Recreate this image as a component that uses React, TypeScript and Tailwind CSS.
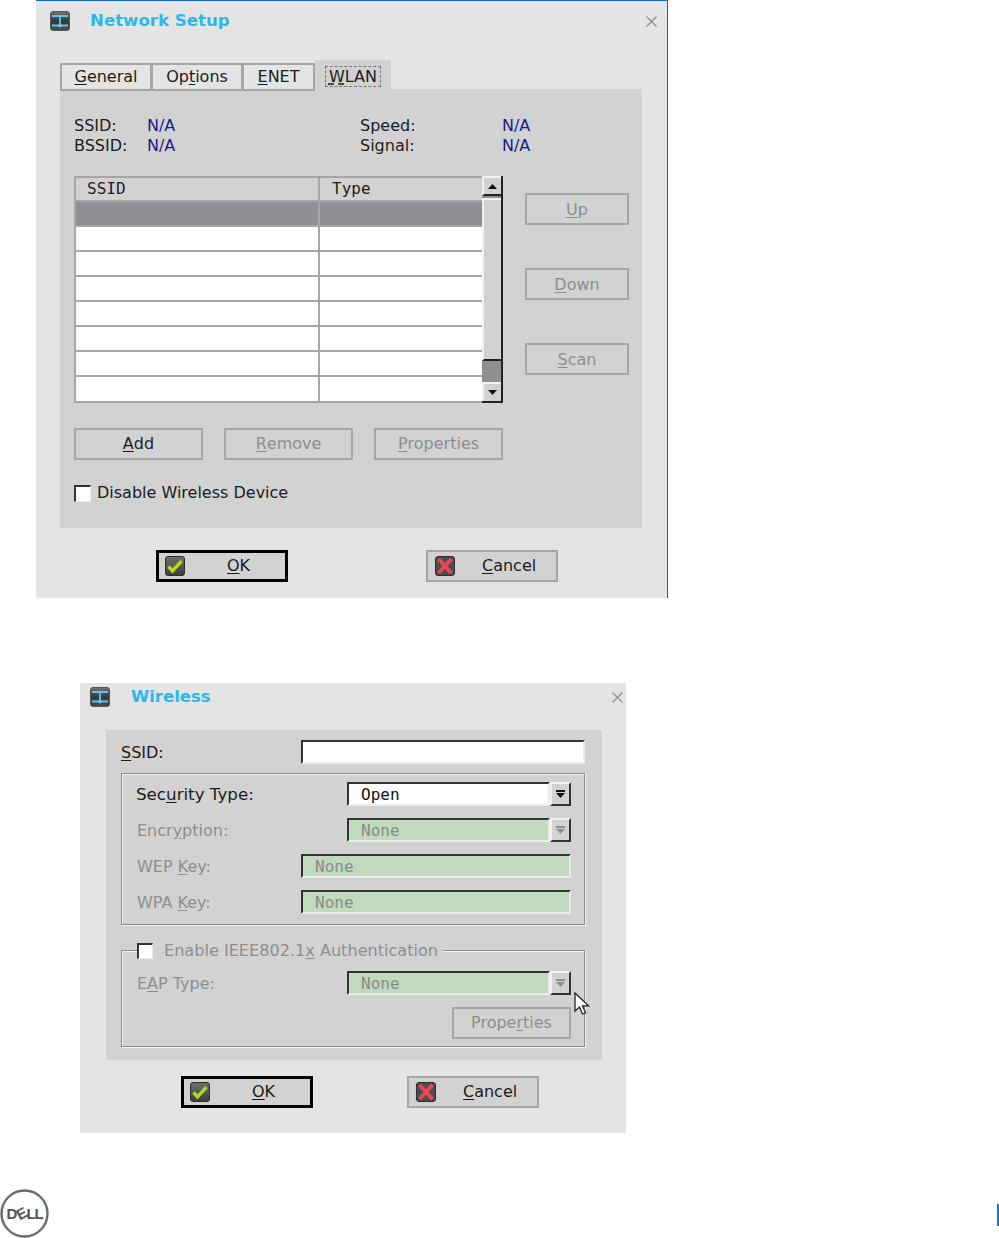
import React from "react";

const sans = "font-['DejaVu_Sans',sans-serif]";
const mono = "font-['DejaVu_Sans_Mono',monospace]";

function NetIcon() {
  return (
    <svg width="20" height="20" viewBox="0 0 20 20" className="shrink-0">
      <defs>
        <linearGradient id="netBg" x1="0" y1="0" x2="0" y2="1">
          <stop offset="0" stopColor="#74777a" />
          <stop offset="0.5" stopColor="#37393b" />
          <stop offset="1" stopColor="#4a4c4e" />
        </linearGradient>
      </defs>
      <rect x="0.5" y="0.5" width="19" height="19" rx="2.5" fill="url(#netBg)" stroke="#555" />
      <path d="M2 5h16M10 5v10M2 14.5h16" stroke="#5cc4ee" strokeWidth="1.8" fill="none" />
      <circle cx="10" cy="14.5" r="2" fill="#5cc4ee" />
    </svg>
  );
}

function OkIcon() {
  return (
    <svg width="20" height="20" viewBox="0 0 20 20" className="shrink-0">
      <defs>
        <linearGradient id="okBg" x1="0" y1="0" x2="0" y2="1">
          <stop offset="0" stopColor="#6c6e70" />
          <stop offset="1" stopColor="#3c3d3e" />
        </linearGradient>
      </defs>
      <rect x="0.5" y="0.5" width="19" height="19" rx="2.5" fill="url(#okBg)" stroke="#2e2e2e" />
      <path d="M3.5 10.5l4 4.5L16.5 5" stroke="#b0d81e" strokeWidth="3.4" fill="none" />
    </svg>
  );
}

function CancelIcon() {
  return (
    <svg width="20" height="20" viewBox="0 0 20 20" className="shrink-0">
      <rect x="0.5" y="0.5" width="19" height="19" rx="2.5" fill="#4c4d4e" stroke="#2e2e2e" />
      <path d="M3.5 3l13 14M16.5 3l-13 14" stroke="#ec4452" strokeWidth="4" fill="none" />
    </svg>
  );
}

function Close() {
  return (
    <svg width="11" height="11" viewBox="0 0 11 11">
      <path d="M0.5 0.5l10 10M10.5 0.5l-10 10" stroke="#8a8a8a" strokeWidth="1.1" fill="none" />
    </svg>
  );
}

function Arrow({ up, color = "#111" }: { up?: boolean; color?: string }) {
  return (
    <svg width="9" height="5" viewBox="0 0 9 5">
      <path d={up ? "M4.5 0L9 5H0z" : "M0 0h9L4.5 5z"} fill={color} />
    </svg>
  );
}

function Btn({
  before,
  mark,
  after,
  disabled,
  className,
}: {
  before?: string;
  mark: string;
  after?: string;
  disabled?: boolean;
  className: string;
}) {
  return (
    <div
      className={`flex h-[32px] items-center justify-center border-2 border-[#a6a6a6] bg-[#d2d2d2] text-[16px] ${
        disabled ? "text-[#8e8e8e]" : "text-[#1c1c1c]"
      } ${className}`}
    >
      {before}
      <span className="underline underline-offset-2">{mark}</span>
      {after}
    </div>
  );
}

function DialogFooter({ okMargin, gap }: { okMargin: string; gap: string }) {
  return (
    <div className={`flex ${okMargin} ${gap}`}>
      <div className="flex h-[32px] w-[132px] items-center border-[3px] border-black bg-[#d2d2d2] pl-[6px] text-[16px] text-[#1c1c1c]">
        <OkIcon />
        <span className="ml-[42px]">
          <span className="underline underline-offset-2">O</span>K
        </span>
      </div>
      <div className="flex h-[32px] w-[132px] items-center border-2 border-[#a6a6a6] bg-[#d2d2d2] pl-[7px] text-[16px] text-[#1c1c1c]">
        <CancelIcon />
        <span className="ml-[27px]">
          <span className="underline underline-offset-2">C</span>ancel
        </span>
      </div>
    </div>
  );
}

function Sunken({
  text,
  green,
  className,
}: {
  text?: string;
  green?: boolean;
  className: string;
}) {
  return (
    <div
      className={`flex h-[24px] items-center border-t-2 border-r-2 border-b-2 border-l-2 border-t-[#333] border-l-[#333] border-r-[#ececec] border-b-[#ececec] pt-[1px] ${mono} text-[16px] ${
        green ? "bg-[#bfdabd] text-[#8a8a8a]" : "bg-white text-[#111]"
      } ${className}`}
    >
      {text}
    </div>
  );
}

function Combo({ text, green, className }: { text: string; green?: boolean; className?: string }) {
  const color = green ? "#8e8e8e" : "#111";
  return (
    <div className={`flex ${className ?? ""}`}>
      <Sunken text={text} green={green} className="w-[203px] pl-[12px]" />
      <div className="flex h-[24px] w-[21px] flex-col items-center justify-center gap-[1px] border-t-2 border-l-2 border-r-2 border-b-2 border-t-[#f2f2f2] border-l-[#f2f2f2] border-r-[#333] border-b-[#333] bg-[#d2d2d2]">
        <span className="h-[2px] w-[9px]" style={{ background: color }} />
        <Arrow color={color} />
      </div>
    </div>
  );
}

function NetworkSetup() {
  const rows = [0, 1, 2, 3, 4, 5, 6, 7];
  return (
    <div className="ml-[36px] h-[598px] w-[632px] border-t border-r border-[#1565c0] bg-[#e4e4e4]">
      <div className="mt-[10px] flex h-[20px] items-center pl-[14px] pr-[10px]">
        <NetIcon />
        <span className="ml-[20px] text-[16.6px] font-bold leading-[18px] text-[#2cb8ec]">Network Setup</span>
        <span className="ml-auto flex"><Close /></span>
      </div>
      <div className="mt-[29px] ml-[24px] flex h-[29px] items-start text-[16px] text-[#1c1c1c]">
        <div className="relative mt-[3px] flex h-[28px] w-[92px] items-center justify-center border-2 border-[#a6a6a6] bg-[#e4e4e4]">
          <span><span className="underline underline-offset-2">G</span>eneral</span>
        </div>
        <div className="relative mt-[3px] -ml-[1px] flex h-[28px] w-[92px] items-center justify-center border-2 border-[#a6a6a6] bg-[#e4e4e4]">
          <span>Op<span className="underline underline-offset-2">t</span>ions</span>
        </div>
        <div className="relative mt-[3px] -ml-[1px] flex h-[28px] w-[73px] items-center justify-center border-2 border-[#a6a6a6] bg-[#e4e4e4]">
          <span><span className="underline underline-offset-2">E</span>NET</span>
        </div>
        <div className="flex h-[29px] w-[76px] items-center justify-center bg-[#d2d2d2] pt-[4px]">
          <span className="border border-dashed border-[#777] px-[3px] leading-[19px]">
            <span className="underline decoration-dashed underline-offset-2">W</span>LAN
          </span>
        </div>
      </div>
      <div className="ml-[24px] h-[439px] w-[582px] bg-[#d2d2d2] pt-[27px] pl-[14px] text-[16px] text-[#1c1c1c]">
        <div className="grid grid-cols-[73px_213px_142px_60px] leading-[20px]">
          <span>SSID:</span>
          <span className="text-[#1a1a8c]">N/A</span>
          <span>Speed:</span>
          <span className="text-[#1a1a8c]">N/A</span>
          <span>BSSID:</span>
          <span className="text-[#1a1a8c]">N/A</span>
          <span>Signal:</span>
          <span className="text-[#1a1a8c]">N/A</span>
        </div>
        <div className="mt-[20px] flex">
          <div className="flex h-[227px] w-[429px] border-2 border-r-0 border-[#a6a6a6]">
            <div className="w-[406px]">
              <div className={`flex h-[24px] ${mono} items-center border-b-2 border-[#a6a6a6] text-[16px] text-[#1c1c1c]`}>
                <span className="w-[242px] pl-[11px]">SSID</span>
                <span className="h-full w-[2px] bg-[#a6a6a6]" />
                <span className="pl-[12px]">Type</span>
              </div>
              {rows.map((r) => (
                <div
                  key={r}
                  className={`flex ${r === 7 ? "h-[24px]" : "h-[25px] border-b-2 border-[#a6a6a6]"} ${
                    r === 0 ? "bg-[#8f9094]" : "bg-white"
                  }`}
                >
                  <span className="w-[242px]" />
                  <span className="h-full w-[2px] bg-[#a6a6a6]" />
                </div>
              ))}
            </div>
            <div className="-my-[2px] flex w-[21px] flex-col border-r-2 border-b-2 border-[#222] bg-[#8f8f8f]">
              <div className="flex h-[20px] items-center justify-center border-t-2 border-l-2 border-[#f2f2f2] border-b-2 border-b-[#222] bg-[#d2d2d2]">
                <Arrow up />
              </div>
              <div className="mt-[2px] h-[163px] border-t-2 border-l-2 border-[#f2f2f2] border-b-2 border-b-[#222] bg-[#d2d2d2]" />
              <div className="flex-1" />
              <div className="flex h-[19px] items-center justify-center border-t-2 border-l-2 border-[#f2f2f2] bg-[#d2d2d2]">
                <Arrow />
              </div>
            </div>
          </div>
          <div className="ml-[22px] flex flex-col pt-[17px]">
            <Btn disabled mark="U" after="p" className="w-[104px] pt-[2px]" />
            <Btn disabled mark="D" after="own" className="mt-[43px] w-[104px] pt-[2px]" />
            <Btn disabled mark="S" after="can" className="mt-[43px] w-[104px] pt-[2px]" />
          </div>
        </div>
        <div className="mt-[25px] flex gap-[21px]">
          <Btn mark="A" after="dd" className="w-[129px]" />
          <Btn disabled mark="R" after="emove" className="w-[129px]" />
          <Btn disabled mark="P" after="roperties" className="w-[129px]" />
        </div>
        <div className="mt-[23px] flex items-center leading-[20px]">
          <span className="h-[17px] w-[17px] border-t-2 border-l-2 border-r border-b border-t-[#333] border-l-[#333] border-r-[#eee] border-b-[#eee] bg-white" />
          <span className="ml-[6px]">Disable Wireless Device</span>
        </div>
      </div>
      <DialogFooter okMargin="mt-[22px] ml-[120px]" gap="gap-[138px]" />
    </div>
  );
}

function Wireless() {
  const dim = "text-[#8e8e8e]";
  return (
    <div className="relative mt-[85px] ml-[80px] h-[450px] w-[546px] bg-[#e4e4e4] pt-[4px]">
      <div className="flex h-[20px] items-center pl-[10px] pr-[3px]">
        <NetIcon />
        <span className="ml-[21px] text-[16.5px] font-bold leading-[18px] text-[#2cb8ec]">Wireless</span>
        <span className="ml-auto flex"><Close /></span>
      </div>
      <div className="mt-[23px] ml-[26px] h-[330px] w-[496px] bg-[#d2d2d2] px-[15px] pt-[10px] text-[16px] leading-[20px] text-[#1c1c1c]">
        <div className="flex items-center">
          <span className="w-[180px] pt-[2px]"><span className="underline underline-offset-2">S</span>SID:</span>
          <Sunken className="w-[284px]" />
        </div>
        <div className="mt-[9px] h-[152px] w-[464px] border border-[#8c8c8c] pt-[8px] pl-[15px] shadow-[inset_1px_1px_0_#f2f2f2,1px_1px_0_#f2f2f2]">
          <div className="flex items-center">
            <span className="-ml-[1px] w-[211px] text-[16.7px]">Sec<span className="underline underline-offset-2">u</span>rity Type:</span>
            <Combo text="Open" />
          </div>
          <div className={`mt-[12px] flex items-center ${dim}`}>
            <span className="w-[210px] pt-[2px]">Encr<span className="underline underline-offset-2">y</span>ption:</span>
            <Combo text="None" green />
          </div>
          <div className={`mt-[12px] flex items-center ${dim}`}>
            <span className="w-[164px] pt-[2px]">WEP <span className="underline underline-offset-2">K</span>ey:</span>
            <Sunken text="None" green className="w-[270px] pl-[12px]" />
          </div>
          <div className={`mt-[12px] flex items-center ${dim}`}>
            <span className="w-[164px] pt-[2px]">WPA <span className="underline underline-offset-2">K</span>ey:</span>
            <Sunken text="None" green className="w-[270px] pl-[12px]" />
          </div>
        </div>
        <fieldset className={`mt-[17px] h-[105px] w-[464px] border border-[#8c8c8c] pl-[15px] shadow-[inset_1px_1px_0_#f2f2f2,1px_1px_0_#f2f2f2] ${dim}`}>
          <legend className="relative flex items-center bg-[#d2d2d2] pr-[5px] leading-[17px]">
            <span className="h-[16px] w-[16px] border-t-2 border-l-2 border-r border-b border-t-[#333] border-l-[#333] border-r-[#eee] border-b-[#eee] bg-white" />
            <span className="ml-[11px] text-[16.1px]">Enable IEEE802.1<span className="underline underline-offset-2">x</span> Authentication</span>
          </legend>
          <div className="mt-[12px] flex items-center">
            <span className="w-[210px] pt-[2px]">E<span className="underline underline-offset-2">A</span>P Type:</span>
            <Combo text="None" green />
          </div>
          <Btn disabled before="Prope" mark="r" after="ties" className="mt-[12px] ml-[315px] w-[119px]" />
        </fieldset>
      </div>
      <DialogFooter okMargin="mt-[16px] ml-[101px]" gap="gap-[94px]" />
      {/* mouse pointer lying over the dialog */}
      <svg width="17" height="24" viewBox="0 0 17 24" className="absolute top-[309px] left-[494px]">
        <path d="M1 1v18l4.5-4 3 7 3-1.2-3-7h6z" fill="#fff" stroke="#222" strokeWidth="1.3" />
      </svg>
    </div>
  );
}

export default function App() {
  return (
    <div className={`h-[1238px] w-[999px] overflow-hidden bg-white ${sans}`}>
      <NetworkSetup />
      <Wireless />
      <div className="mt-[56px] flex items-center justify-between">
        <svg width="49" height="49" viewBox="0 0 49 49">
          <circle cx="24.5" cy="24.5" r="23" fill="none" stroke="#6b6b6b" strokeWidth="2.4" />
          <text x="6.5" y="30" fontFamily="Liberation Sans" fontWeight="700" fontSize="15" fill="#555">D</text>
          <text x="17" y="30" fontFamily="Liberation Sans" fontWeight="700" fontSize="15" fill="#555" transform="rotate(-28 21.5 25)">E</text>
          <text x="26.5" y="30" fontFamily="Liberation Sans" fontWeight="700" fontSize="15" fill="#555">L</text>
          <text x="34.5" y="30" fontFamily="Liberation Sans" fontWeight="700" fontSize="15" fill="#555">L</text>
        </svg>
        <span className="mt-[3px] h-[22px] w-[2px] bg-[#0a7ec2]" />
      </div>
    </div>
  );
}
